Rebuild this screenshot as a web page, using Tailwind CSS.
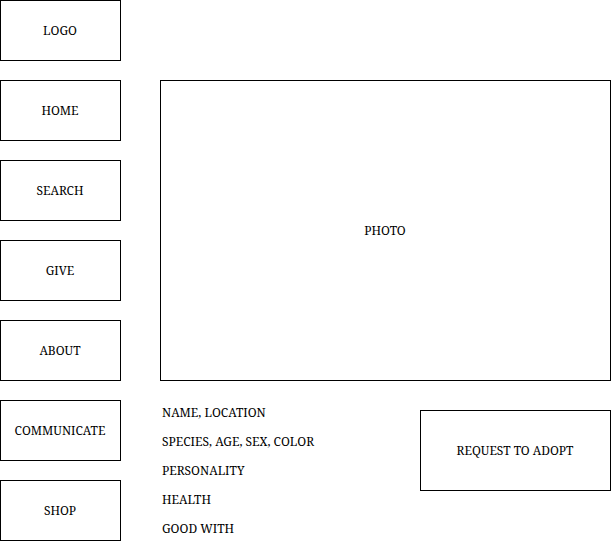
<!DOCTYPE html>
<html lang="en">
<head>
<meta charset="utf-8">
<meta name="viewport" content="width=device-width, initial-scale=1">
<title>Adopt a pet</title>
<script src="https://cdn.jsdelivr.net/npm/@tailwindcss/browser@4"></script>
</head>
<body class="bg-white font-['Noto_Serif_Condensed','Noto_Serif','Droid_Serif','Liberation_Serif',serif] text-[12px] leading-[15px] text-black">
<div class="flex gap-[39px]">
  <nav aria-label="Main" class="flex w-[121px] shrink-0 flex-col gap-[19px]">
    <a href="#logo" class="flex h-[61px] items-center justify-center border border-black pr-px">LOGO</a>
    <a href="#home" class="flex h-[61px] items-center justify-center border border-black pr-px">HOME</a>
    <a href="#search" class="flex h-[61px] items-center justify-center border border-black pr-px">SEARCH</a>
    <a href="#give" class="flex h-[61px] items-center justify-center border border-black pr-px">GIVE</a>
    <a href="#about" class="flex h-[61px] items-center justify-center border border-black pr-px">ABOUT</a>
    <a href="#communicate" class="flex h-[61px] items-center justify-center border border-black pr-px">COMMUNICATE</a>
    <a href="#shop" class="flex h-[61px] items-center justify-center border border-black pr-px">SHOP</a>
  </nav>
  <main class="min-w-0 flex-1 pt-20">
    <figure class="flex h-[301px] items-center justify-center border border-black pr-px">PHOTO</figure>
    <div class="flex items-start justify-between">
      <ul class="flex flex-col gap-[14px] pt-6 pl-[2px]">
        <li>NAME, LOCATION</li>
        <li>SPECIES, AGE, SEX, COLOR</li>
        <li>PERSONALITY</li>
        <li>HEALTH</li>
        <li>GOOD WITH</li>
      </ul>
      <button type="button" class="mt-[29px] h-[81px] w-[191px] border border-black pr-px">REQUEST TO ADOPT</button>
    </div>
  </main>
</div>
</body>
</html>
